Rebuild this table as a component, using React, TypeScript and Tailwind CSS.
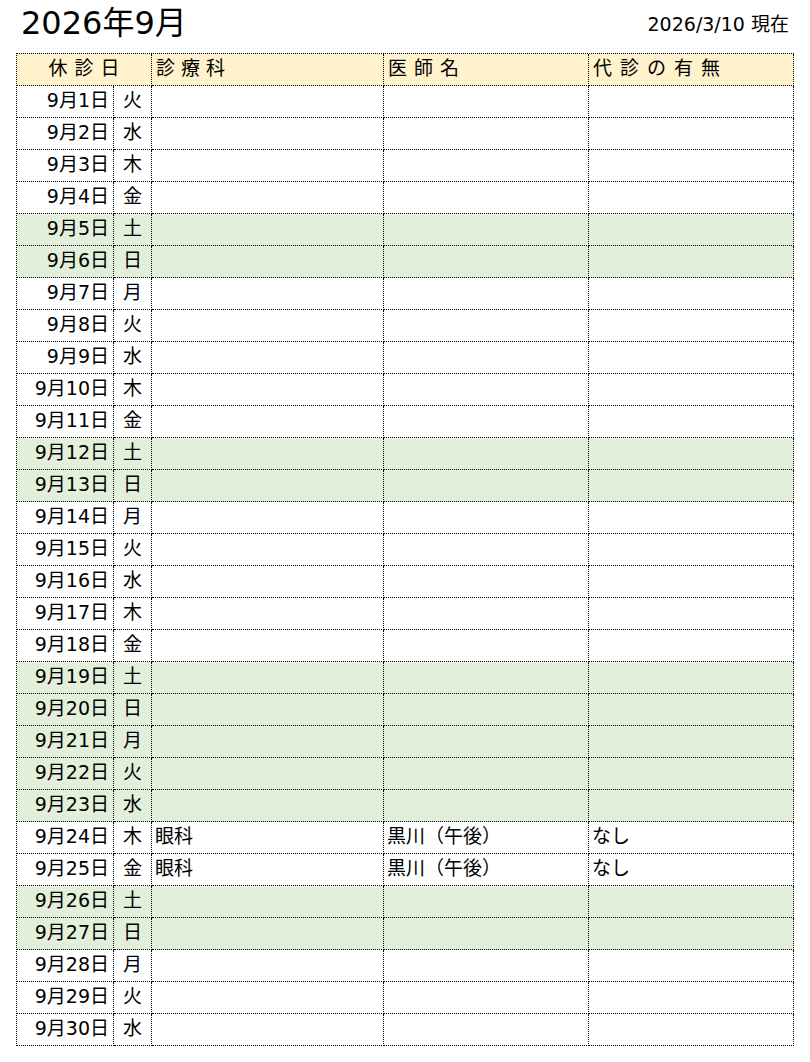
import React from "react";

const WD = ["日", "月", "火", "水", "木", "金", "土"];
const GREEN = new Set([5, 6, 12, 13, 19, 20, 21, 22, 23, 26, 27]);

const rows = Array.from({ length: 30 }, (_, i) => {
  const d = i + 1;
  // 2026-09-01 is Tuesday
  const wd = WD[(2 + i) % 7];
  let dept = "";
  let doc = "";
  let sub = "";
  if (d === 24 || d === 25) {
    dept = "眼科";
    doc = "黒川（午後）";
    sub = "なし";
  }
  return { d, wd, dept, doc, sub, green: GREEN.has(d) };
});

const cell = "border-r border-b border-dotted border-black h-[32px] flex items-center pb-[2px]";

export default function App() {
  return (
    <div
      className="w-[810px] h-[1062px] bg-white text-black"
      style={{ fontFamily: '"DejaVu Sans", "Noto Sans CJK JP", sans-serif' }}
    >
      <div className="flex justify-between items-start pl-[21px] pr-[21px] h-[53px]">
        <div className="text-[32px] leading-none pt-[7px]">2026年9月</div>
        <div className="text-[19px] leading-none pt-[15px]">2026/3/10 現在</div>
      </div>
      <div className="ml-[16px] w-[778px] border-l border-t border-dotted border-black grid grid-cols-[97px_38px_232px_205px_205px] text-[19px] leading-none">
        <div className={`${cell} col-span-2 justify-center bg-[#fff2cc] tracking-[7px] pl-[7px]`}>休診日</div>
        <div className={`${cell} bg-[#fff2cc] tracking-[6px] pl-[4px]`}>診療科</div>
        <div className={`${cell} bg-[#fff2cc] tracking-[7px] pl-[4px]`}>医師名</div>
        <div className={`${cell} bg-[#fff2cc] tracking-[8px] pl-[4px]`}>代診の有無</div>
        {rows.map((r) => {
          const bg = r.green ? "bg-[#e2efda]" : "bg-white";
          return (
            <React.Fragment key={r.d}>
              <div className={`${cell} ${bg} justify-end pr-[4px]`}>9月{r.d}日</div>
              <div className={`${cell} ${bg} justify-center`}>{r.wd}</div>
              <div className={`${cell} ${bg} pl-[3px]`}>{r.dept}</div>
              <div className={`${cell} ${bg} pl-[3px]`}>{r.doc}</div>
              <div className={`${cell} ${bg} pl-[3px]`}>{r.sub}</div>
            </React.Fragment>
          );
        })}
      </div>
    </div>
  );
}
